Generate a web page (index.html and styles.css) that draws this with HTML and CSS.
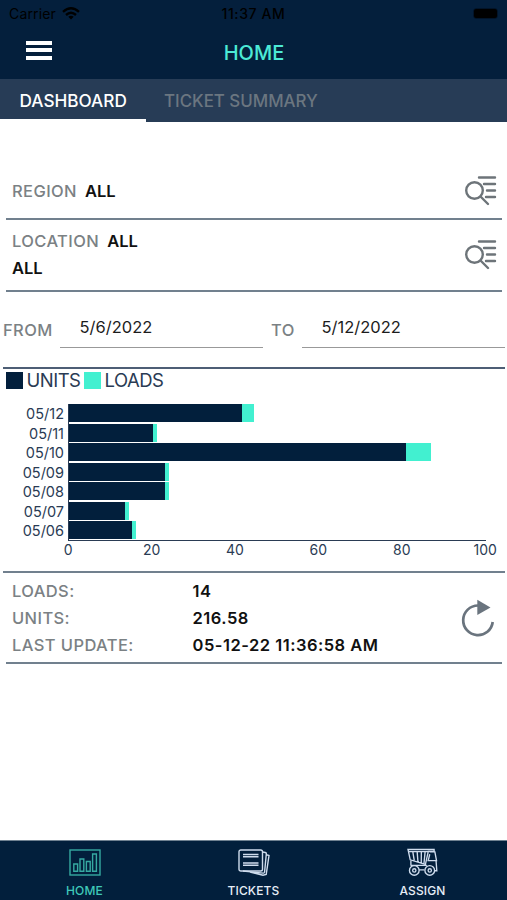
FILE: index.html
```html
<!DOCTYPE html>
<html lang="en">
<head>
    <meta charset="UTF-8">
    <meta name="viewport" content="width=device-width, initial-scale=1.0">
    <title>Home</title>
    <link rel="stylesheet" href="styles.css">
</head>
<body>
    <header class="top">
        <div class="status">
            <span class="carrier">Carrier
                <svg width="18" height="13" viewBox="0 0 18 13" fill="none" stroke="#000" stroke-width="2.4">
                    <path d="M1 4.8Q9-2.2 17 4.8M4 8Q9 3.6 14 8"/>
                    <path d="M9 12.6L6.3 9.8Q9 7.6 11.7 9.8Z" fill="#000" stroke="none"/>
                </svg>
            </span>
            <span class="clock">11:37 AM</span>
            <span class="battery"><i></i></span>
        </div>
        <div class="titlebar">
            <div class="menu"><i></i><i></i><i></i></div>
            <h1>HOME</h1>
        </div>
    </header>

    <nav class="tabs">
        <div class="tab active">DASHBOARD</div>
        <div class="tab">TICKET SUMMARY</div>
    </nav>

    <main>
        <section class="filter region">
            <div><span class="label">REGION</span><b>ALL</b></div>
            <svg class="search" width="34" height="32" viewBox="0 0 34 32">
                <circle cx="10.5" cy="15.5" r="8.3"/>
                <path d="M16.5 21.5L24 29M15 2.5H31M20 9H31M23 15.5H31M22 22H31"/>
            </svg>
        </section>
        <section class="filter location">
            <div>
                <div><span class="label">LOCATION</span><b>ALL</b></div>
                <div><b>ALL</b></div>
            </div>
            <svg class="search" width="34" height="32" viewBox="0 0 34 32">
                <circle cx="10.5" cy="15.5" r="8.3"/>
                <path d="M16.5 21.5L24 29M15 2.5H31M20 9H31M23 15.5H31M22 22H31"/>
            </svg>
        </section>
        <section class="dates">
            <span class="label from">FROM</span>
            <div class="date">5/6/2022</div>
            <span class="label to">TO</span>
            <div class="date">5/12/2022</div>
        </section>

        <section class="chart">
            <div class="legend">
                <i class="units"></i><span>UNITS</span>
                <i class="loads"></i><span>LOADS</span>
            </div>
            <div class="plot">
                <div class="days">
                    <span>05/12</span><span>05/11</span><span>05/10</span><span>05/09</span><span>05/08</span><span>05/07</span><span>05/06</span>
                </div>
                <div class="bars">
                    <div class="bar"><i class="units" style="width:41.4%"></i><i class="loads" style="width:3%"></i></div>
                    <div class="bar"><i class="units" style="width:20.1%"></i><i class="loads" style="width:1%"></i></div>
                    <div class="bar"><i class="units" style="width:80.8%"></i><i class="loads" style="width:6%"></i></div>
                    <div class="bar"><i class="units" style="width:23%"></i><i class="loads" style="width:1%"></i></div>
                    <div class="bar"><i class="units" style="width:23%"></i><i class="loads" style="width:1%"></i></div>
                    <div class="bar"><i class="units" style="width:13.5%"></i><i class="loads" style="width:1%"></i></div>
                    <div class="bar"><i class="units" style="width:15%"></i><i class="loads" style="width:1%"></i></div>
                </div>
            </div>
            <div class="ticks">
                <span>0</span><span>20</span><span>40</span><span>60</span><span>80</span><span>100</span>
            </div>
        </section>

        <section class="totals">
            <dl>
                <dt>LOADS:</dt><dd>14</dd>
                <dt>UNITS:</dt><dd>216.58</dd>
                <dt>LAST UPDATE:</dt><dd>05-12-22 11:36:58 AM</dd>
            </dl>
            <svg class="refresh" width="34" height="40" viewBox="0 0 34 40">
                <path d="M17 6.5A14.8 14.8 0 1 0 31.7 23" fill="none" stroke="#6a747e" stroke-width="2.7"/>
                <path d="M16.3 0.7L29.5 8.5L16.3 16Z" fill="#6a747e"/>
            </svg>
        </section>
    </main>

    <footer class="bottom">
        <div class="item current">
            <svg width="32" height="28" viewBox="0 0 32 28">
                <rect x="1" y="1.5" width="30" height="25" />
                <path d="M4.8 22.8V15.5H8.6V22.8ZM11 22.8V10.5H14.8V22.8ZM17.4 22.8V13H21.2V22.8ZM23.6 22.8V5.5H27.4V22.8Z"/>
            </svg>
            <span>HOME</span>
        </div>
        <div class="item">
            <svg width="32" height="28" viewBox="0 0 32 28">
                <rect x="1" y="1.5" width="23.5" height="21" rx="1.8"/>
                <path d="M5 6H20.5M5 8.3H20.5M5 14.5H20.5M5 16.8H20.5"/>
                <path d="M24.5 3.5L27.3 4Q28.5 4.2 28.3 5.5L26.6 23.5Q26.4 24.8 25.1 24.6L5 22.5M28.4 6.2L31 7L28.2 26L25 26.8L12 23.5"/>
            </svg>
            <span>TICKETS</span>
        </div>
        <div class="item">
            <svg width="33" height="30" viewBox="0 0 33 30">
                <path d="M1.5 1.5H28.5V3.5H22.5L19.5 17L3.8 12.2ZM2 3.8H22M6.5 4L8 13M11 4L11.8 14.5M15.3 4L15.2 15.5M19.2 4L18 16.3"/>
                <path d="M23.8 4H29.3L31 13H21.6M24 6.5L22.5 12.5M30.5 13L31.3 23.5H29M4.5 13V17.5M13 22.7H18.5M4 18H21"/>
                <circle cx="8" cy="23.2" r="5"/>
                <circle cx="8" cy="23.2" r="1.7"/>
                <circle cx="24" cy="23.2" r="5"/>
                <circle cx="24" cy="23.2" r="1.7"/>
            </svg>
            <span>ASSIGN</span>
        </div>
    </footer>
</body>
</html>
```
FILE: styles.css
```css
* {
    box-sizing: border-box;
}
body {
    display: flex;
    flex-direction: column;
    height: 900px;
    margin: 0;
    font-family: Inter, "Liberation Sans", sans-serif;
    font-size: 16.5px;
    background-color: #fff;
    overflow: hidden;
}
.top {
    height: 79px;
    background-color: #041f3c;
}
.status {
    display: grid;
    grid-template-columns: 1fr 1fr 1fr;
    align-items: center;
    height: 27px;
    padding: 0 9px;
    font-size: 14px;
    line-height: 27px;
    color: #000;
}
.carrier {
    display: flex;
    align-items: center;
    gap: 6px;
    letter-spacing: 0.15px;
}
.clock {
    text-align: center;
    font-weight: 500;
    letter-spacing: 0.6px;
}
.battery {
    justify-self: end;
    padding: 1px;
    border-radius: 4px;
    background-color: #021429;
}
.battery i {
    display: block;
    width: 23px;
    height: 9px;
    border-radius: 2px;
    background-color: #000;
}
.titlebar {
    display: grid;
    grid-template-columns: 100px 1fr 100px;
    align-items: center;
    height: 50px;
}
.menu {
    display: grid;
    gap: 3.5px;
    width: 26px;
    margin-left: 26px;
    margin-top: -4px;
}
.menu i {
    height: 4px;
    background-color: #fff;
}
h1 {
    margin: 1px 0 0 1px;
    font-size: 20px;
    font-weight: 500;
    text-align: center;
    color: #4cead6;
}
.tabs {
    display: flex;
    height: 43px;
    background-color: #273c56;
}
.tab {
    height: 43px;
    padding: 0 18px;
    line-height: 44px;
    font-size: 16.9px;
    font-weight: 500;
    color: #6b7680;
}
.tab.active {
    width: 146px;
    padding-left: 19.5px;
    font-size: 17.2px;
    color: #fff;
    border-bottom: 3px solid #fff;
}
main {
    flex: 1;
    padding-top: 42px;
}
.label, dt {
    font-weight: 500;
    letter-spacing: 0.4px;
    color: #7b8184;
}
b, dd {
    font-weight: 600;
    color: #111;
}
.filter {
    display: flex;
    justify-content: space-between;
    align-items: center;
    margin: 0 5px 0 6px;
    padding: 0 4px 0 6px;
    border-bottom: 2px solid #71808e;
    line-height: 27px;
}
.filter .label + b {
    margin-left: 8px;
}
.region {
    height: 56px;
}
.location {
    height: 72px;
}
.search {
    fill: none;
    stroke: #6d7479;
    stroke-width: 2.4;
    stroke-linecap: round;
}
.dates {
    display: flex;
    height: 77px;
    margin: 0 2px 0 3px;
    padding-top: 19px;
    border-bottom: 2px solid #4d5e75;
}
.dates .label {
    line-height: 38px;
}
.from {
    width: 57px;
}
.to {
    width: 39px;
    padding-left: 8px;
}
.date {
    flex: 1;
    height: 37px;
    padding-left: 19.5px;
    line-height: 33px;
    color: #1c1c1c;
    border-bottom: 1px solid #999;
}
.chart {
    height: 204px;
    margin: 0 2px 0 3px;
    color: #2a3b54;
    border-bottom: 2px solid #71808e;
}
.legend {
    display: flex;
    align-items: center;
    height: 22px;
    padding-left: 3px;
    font-size: 18.5px;
    letter-spacing: -0.5px;
}
.legend i {
    width: 17px;
    height: 17px;
    margin-right: 3.5px;
}
.legend span {
    margin-right: 3.5px;
}
.units {
    background-color: #021f3c;
}
.loads {
    background-color: #42f0d0;
}
.plot {
    display: flex;
    height: 137px;
    margin-top: 13px;
}
.days {
    width: 65px;
    padding-right: 4px;
    font-size: 14.5px;
    text-align: right;
}
.days span {
    display: block;
    height: 19.5px;
    line-height: 20px;
}
.bars {
    width: 418px;
    border-left: 1px solid #2a3b54;
    border-bottom: 1px solid #2a3b54;
}
.bar {
    display: flex;
    height: 19.5px;
    padding-bottom: 1.5px;
}
.ticks {
    display: flex;
    margin-left: 23.5px;
    font-size: 14px;
    line-height: 17px;
}
.ticks span {
    width: 83.4px;
    flex-shrink: 0;
    text-align: center;
}
.totals {
    display: flex;
    justify-content: space-between;
    height: 91px;
    margin: 0 5px 0 6px;
    padding: 5px 7px 0 6px;
    border-bottom: 2px solid #71808e;
}
dl {
    display: grid;
    grid-template-columns: 180.5px auto;
    margin: 0;
    line-height: 27px;
    height: 81px;
}
dd {
    margin: 0;
    letter-spacing: 0.5px;
}
.refresh {
    margin-top: 21px;
}
.bottom {
    display: flex;
    height: 60px;
    background-color: #021f3c;
    border-top: 1px solid #6f8191;
}
.item {
    display: flex;
    flex: 1;
    flex-direction: column;
    align-items: center;
    padding-top: 7px;
    font-size: 12px;
    font-weight: 500;
    letter-spacing: 0.15px;
    color: #e6edf6;
}
.item svg {
    height: 29px;
    fill: none;
    stroke: #cfdced;
    stroke-width: 1.4;
}
.item span {
    margin-top: 7px;
    line-height: 14px;
}
.current {
    color: #3fc9b9;
}
.current svg {
    stroke: #36aaa2;
}
```
